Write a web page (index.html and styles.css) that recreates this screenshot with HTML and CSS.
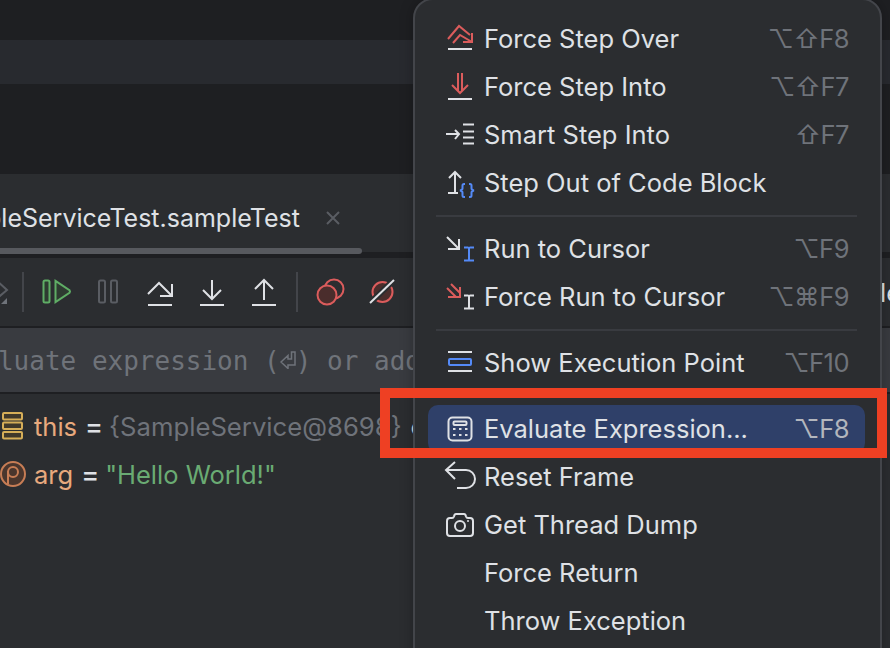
FILE: index.html
```html
<!DOCTYPE html>
<html lang="en">
<head>
<meta charset="utf-8">
<title>Debugger context menu</title>
<link rel="stylesheet" href="styles.css">
</head>
<body>
<div class="app">
  <div class="band band-a"></div>
  <div class="band band-b"></div>
  <div class="band band-c"></div>
  <div class="tabbar">
    <div class="tab-title"><span>SampleServiceTest.sampleTest</span></div>
    <svg class="tab-close" width="16" height="16" viewBox="0 0 16 16"><path d="M2 2L14 14M14 2L2 14" class="s-dim"/></svg>
  </div>
  <div class="scroll"><div class="thumb"></div></div>
  <div class="toolbar">
    <svg class="ti first" width="32" height="32" viewBox="0 0 32 32"><path d="M17 3L29 14 17 24" class="s-dim"/><path d="M29 28V22L23 28Z" fill="#6f737a"/></svg>
    <div class="vsep"></div>
    <svg class="ti" width="32" height="32" viewBox="0 0 32 32"><rect x="3.500" y="4.500" width="6" height="22" rx="1.500" class="s-green" fill="#2e3b31"/><path d="M15.500 4.800L29.500 14.200Q30.500 15.500 29.500 16.800L15.500 26.200Z" class="s-green" fill="#2e3b31"/></svg>
    <svg class="ti" width="32" height="32" viewBox="0 0 32 32"><rect x="7" y="4.500" width="6" height="22" rx="1.500" class="s-dim"/><rect x="19" y="4.500" width="6" height="22" rx="1.500" class="s-dim"/></svg>
    <svg class="ti" width="32" height="32" viewBox="0 0 32 32"><path d="M4 18L15 7 28 20M28 8V20H16" class="s-light"/><path d="M4 29H28" class="s-light"/></svg>
    <svg class="ti" width="32" height="32" viewBox="0 0 32 32"><path d="M16 4V23M7 14L16 23 25 14M4 29H28" class="s-light"/></svg>
    <svg class="ti" width="32" height="32" viewBox="0 0 32 32"><path d="M16 24V4M7 13L16 4 25 13M4 29H28" class="s-light"/></svg>
    <div class="vsep"></div>
    <svg class="ti" width="32" height="32" viewBox="0 0 32 32"><circle cx="20" cy="13" r="9.500" class="s-red"/><circle cx="13" cy="19" r="9.500" class="s-red" fill="#4a2d2c"/></svg>
    <svg class="ti" width="32" height="32" viewBox="0 0 32 32"><circle cx="16.500" cy="16" r="10" class="s-red" fill="#4a2d2c"/><path d="M4 27L28 4" stroke="#2b2d30" stroke-width="6"/><path d="M4 27L28 4" class="s-light"/></svg>
    <span class="trail">le</span>
  </div>
  <div class="evalbar"><span>Evaluate expression (<svg class="enter" width="16" height="18" viewBox="0 0 16 18"><path d="M1 11L8 4.500V8H11.500V1H15V14H8V17.500Z" class="s-mono"/></svg>) or add a watch</span></div>
  <div class="vars">
    <div class="var">
      <svg class="var-icon" width="28" height="30" viewBox="0 0 28 30"><rect x="3" y="2" width="19" height="6.500" rx="1" class="s-yellow" fill="#40382a"/><rect x="3" y="11.500" width="19" height="6.500" rx="1" class="s-yellow" fill="#40382a"/><rect x="3" y="21" width="19" height="6.500" rx="1" class="s-yellow" fill="#40382a"/></svg>
      <span class="v-name">this</span><span class="v-eq">=</span><span class="v-obj">{SampleService@8698}</span><span class="v-c">c</span>
      <span class="trail">i</span>
    </div>
    <div class="var">
      <svg class="var-icon" width="28" height="30" viewBox="0 0 28 30"><circle cx="13" cy="15" r="12" class="s-orange" fill="#4a362d"/><circle cx="13" cy="13" r="5" class="s-orange"/><path d="M8 12V25" class="s-orange"/></svg>
      <span class="v-name">arg</span><span class="v-eq">=</span><span class="v-str">"Hello World!"</span>
    </div>
  </div>

  <div class="menu">
    <div class="row">
      <svg class="mi" width="32" height="32" viewBox="0 0 32 32"><path d="M4 16L15 3 26 12M9 20L16 12 28 19M28 10V19H19" class="s-red"/><path d="M4 26H28" class="s-light"/></svg>
      <span class="label">Force Step Over</span><span class="key">⌥⇧F8</span>
    </div>
    <div class="row">
      <svg class="mi" width="32" height="32" viewBox="0 0 32 32"><path d="M14 2V20M18 2V20M8 14L16 22 24 14" class="s-red"/><path d="M4 28H28" class="s-light"/></svg>
      <span class="label">Force Step Into</span><span class="key">⌥⇧F7</span>
    </div>
    <div class="row">
      <svg class="mi" width="32" height="32" viewBox="0 0 32 32"><path d="M2 15H15M11 11L15 15 11 20M19 5.500H30M19 12.500H30M19 18.500H30M19 24.500H30" class="s-light"/></svg>
      <span class="label">Smart Step Into</span><span class="key">⇧F7</span>
    </div>
    <div class="row">
      <svg class="mi" width="32" height="32" viewBox="0 0 32 32"><path d="M11 5V25M5 11L11 5 17 11M4 26H14" class="s-light"/><path d="M21 17H20Q18.500 17 18.500 18.500V21.500Q18.500 23 16 23.500Q18.500 24 18.500 25.500V28.500Q18.500 30 20 30H21M25 17H26Q27.500 17 27.500 18.500V21.500Q27.500 23 30 23.500Q27.500 24 27.500 25.500V28.500Q27.500 30 26 30H25" class="s-blue"/></svg>
      <span class="label">Step Out of Code Block</span>
    </div>
    <div class="sep"></div>
    <div class="row">
      <svg class="mi" width="32" height="32" viewBox="0 0 32 32"><path d="M3 4L15 16M15 6V16H4" class="s-light"/><path d="M20 14.500H24Q25 14.500 25 16V26Q25 27.500 24 27.500H20M30 14.500H26Q25 14.500 25 16V26Q25 27.500 26 27.500H30" class="s-blue"/></svg>
      <span class="label">Run to Cursor</span><span class="key">⌥F9</span>
    </div>
    <div class="row">
      <svg class="mi" width="32" height="32" viewBox="0 0 32 32"><path d="M3 7L12 16M7 3L16 12M16 6V16H4" class="s-red"/><path d="M20 14.500H24Q25 14.500 25 16V26Q25 27.500 24 27.500H20M30 14.500H26Q25 14.500 25 16V26Q25 27.500 26 27.500H30" class="s-light"/></svg>
      <span class="label">Force Run to Cursor</span><span class="key">⌥⌘F9</span>
    </div>
    <div class="sep"></div>
    <div class="row">
      <svg class="mi" width="32" height="32" viewBox="0 0 32 32"><path d="M4 5H28M4 24H28" class="s-light"/><rect x="5" y="12" width="22" height="6" rx="1" class="s-blue"/></svg>
      <span class="label">Show Execution Point</span><span class="key">⌥F10</span>
    </div>
    <div class="sep"></div>
    <div class="row row-active">
      <svg class="mi" width="32" height="32" viewBox="0 0 32 32"><rect x="4.500" y="4.500" width="23" height="23" rx="4" class="s-light"/><rect x="9.500" y="8.500" width="13" height="3.500" rx="1" class="s-light"/><path d="M9 16h2.500M15 16h2.500M21 16h2.500M9 22h2.500M15 22h2.500M21 22h2.500" class="s-light"/></svg>
      <span class="label">Evaluate Expression...</span><span class="key">⌥F8</span>
    </div>
    <div class="row">
      <svg class="mi" width="32" height="32" viewBox="0 0 32 32"><path d="M11 1L2 9 11 18M2 9H22A9 9 0 0 1 22 27H13" class="s-light"/></svg>
      <span class="label">Reset Frame</span>
    </div>
    <div class="row">
      <svg class="mi" width="32" height="32" viewBox="0 0 32 32"><path d="M6 9H8Q9.500 9 10 7.500Q10.500 5 12 5H20Q21.500 5 22 7.500Q22.500 9 24 9H26Q29 9 29 12V24Q29 27 26 27H6Q3 27 3 24V12Q3 9 6 9Z" class="s-light"/><circle cx="16" cy="17" r="5" class="s-light"/><circle cx="24" cy="12" r="1" fill="#dfe1e5"/></svg>
      <span class="label">Get Thread Dump</span>
    </div>
    <div class="row">
      <span class="mi-blank"></span>
      <span class="label">Force Return</span>
    </div>
    <div class="row">
      <span class="mi-blank"></span>
      <span class="label">Throw Exception</span>
    </div>
  </div>
  <div class="callout"></div>
</div>
</body>
</html>
```
FILE: styles.css
```css
html, body {
  margin: 0;
  padding: 0;
  overflow: hidden;
  background: #2b2d30;
}
.app {
  position: relative;
  width: 890px;
  height: 648px;
  overflow: hidden;
  background: #2b2d30;
  font-family: Inter, "Liberation Sans", sans-serif;
  font-size: 25.500px;
  color: #dfe1e5;
}
.band { width: 100%; }
.band-a { height: 40px; background: #1e1f22; }
.band-b { height: 44px; background: #282a2f; }
.band-c { height: 90px; background: #1e1f22; }

svg { display: block; flex: none; fill: none; }
.s-light, .s-dim, .s-red, .s-blue, .s-green, .s-yellow, .s-orange, .s-mono {
  stroke-width: 2;
  stroke-linecap: butt;
  stroke-linejoin: miter;
}
.s-light { stroke: #dfe1e5; }
.s-dim { stroke: #5a5d63; }
.s-red { stroke: #db5c5c; }
.s-blue { stroke: #548af7; }
.s-green { stroke: #5fad65; }
.s-yellow { stroke: #d6ae58; }
.s-orange { stroke: #c77d55; }
.s-mono { stroke: #6f737a; stroke-width: 1.500; }

.tabbar {
  display: flex;
  align-items: center;
  height: 78px;
}
.tab-title {
  display: flex;
  justify-content: flex-end;
  width: 300px;
  white-space: nowrap;
  overflow: hidden;
  padding-top: 10px;
  font-size: 25px;
}
.tab-close { margin-left: 25px; margin-top: 10px; }

.scroll {
  height: 6px;
  background: #1e1f22;
  background-clip: content-box;
  padding-top: 4px;
  margin-top: -4px;
}
.thumb {
  width: 362px;
  height: 6px;
  margin-top: -4px;
  border-radius: 0 3px 3px 0;
  background: #57595e;
}

.toolbar {
  display: flex;
  align-items: center;
  height: 68px;
  gap: 20px;
  color: #dfe1e5;
}
.ti.first { margin-left: -22px; margin-right: -4px; }
.vsep {
  width: 2px;
  height: 40px;
  background: #43454a;
  margin: 0 -4px;
}
.trail {
  margin-left: auto;
  width: 10px;
  overflow: hidden;
  flex: none;
}

.evalbar {
  height: 64px;
  border-top: 2px solid #1e1f22;
  border-bottom: 2px solid #1e1f22;
  background: #393b40;
  display: flex;
  align-items: center;
  width: 890px;
  font-family: "DejaVu Sans Mono", "Liberation Mono", monospace;
  font-size: 26px;
  color: #6f737a;
  white-space: nowrap;
}
.evalbar span { margin-left: -49px; padding-top: 2px; }
.enter { display: inline-block; vertical-align: 1px; }

.vars { padding-top: 8px; }
.var {
  display: flex;
  align-items: center;
  height: 48px;
  white-space: nowrap;
}
.var-icon { width: 28px; margin-right: 6px; }
.v-name { color: #e8a97d; }
.v-eq { margin: 0 6px 0 8px; font-size: 27px; font-weight: 500; color: #dfe1e5; }
.v-obj { color: #6f737a; font-size: 25.700px; }
.v-str { color: #6aab73; }
.v-c { margin-left: 9px; font-weight: 600; }

.menu {
  position: absolute;
  left: 413px;
  top: -2px;
  width: 469px;
  height: 670px;
  box-sizing: border-box;
  padding: 15px 15px 0 13px;
  background: #2b2d30;
  border: 2px solid #43454a;
  border-radius: 20px;
  box-shadow: 0 0 14px rgba(0, 0, 0, 0.25);
}
.row {
  display: flex;
  align-items: center;
  height: 48px;
  padding: 0 16px 0 16px;
  border-radius: 10px;
  white-space: nowrap;
}
.row-active { background: #2f4069; }
.row-active .key { color: #b3b6bd; }
.mi, .mi-blank { width: 32px; height: 32px; margin-right: 8px; flex: none; }
.label { flex: 1; padding-bottom: 2px; }
.key { color: #6f737a; padding-bottom: 2px; letter-spacing: -0.500px; }
.sep {
  height: 2px;
  margin: 8px 8px;
  background: #393b40;
}

.callout {
  position: absolute;
  left: 380px;
  top: 388px;
  width: 507px;
  height: 70px;
  box-sizing: border-box;
  border: 10px solid #ee4023;
}
```
